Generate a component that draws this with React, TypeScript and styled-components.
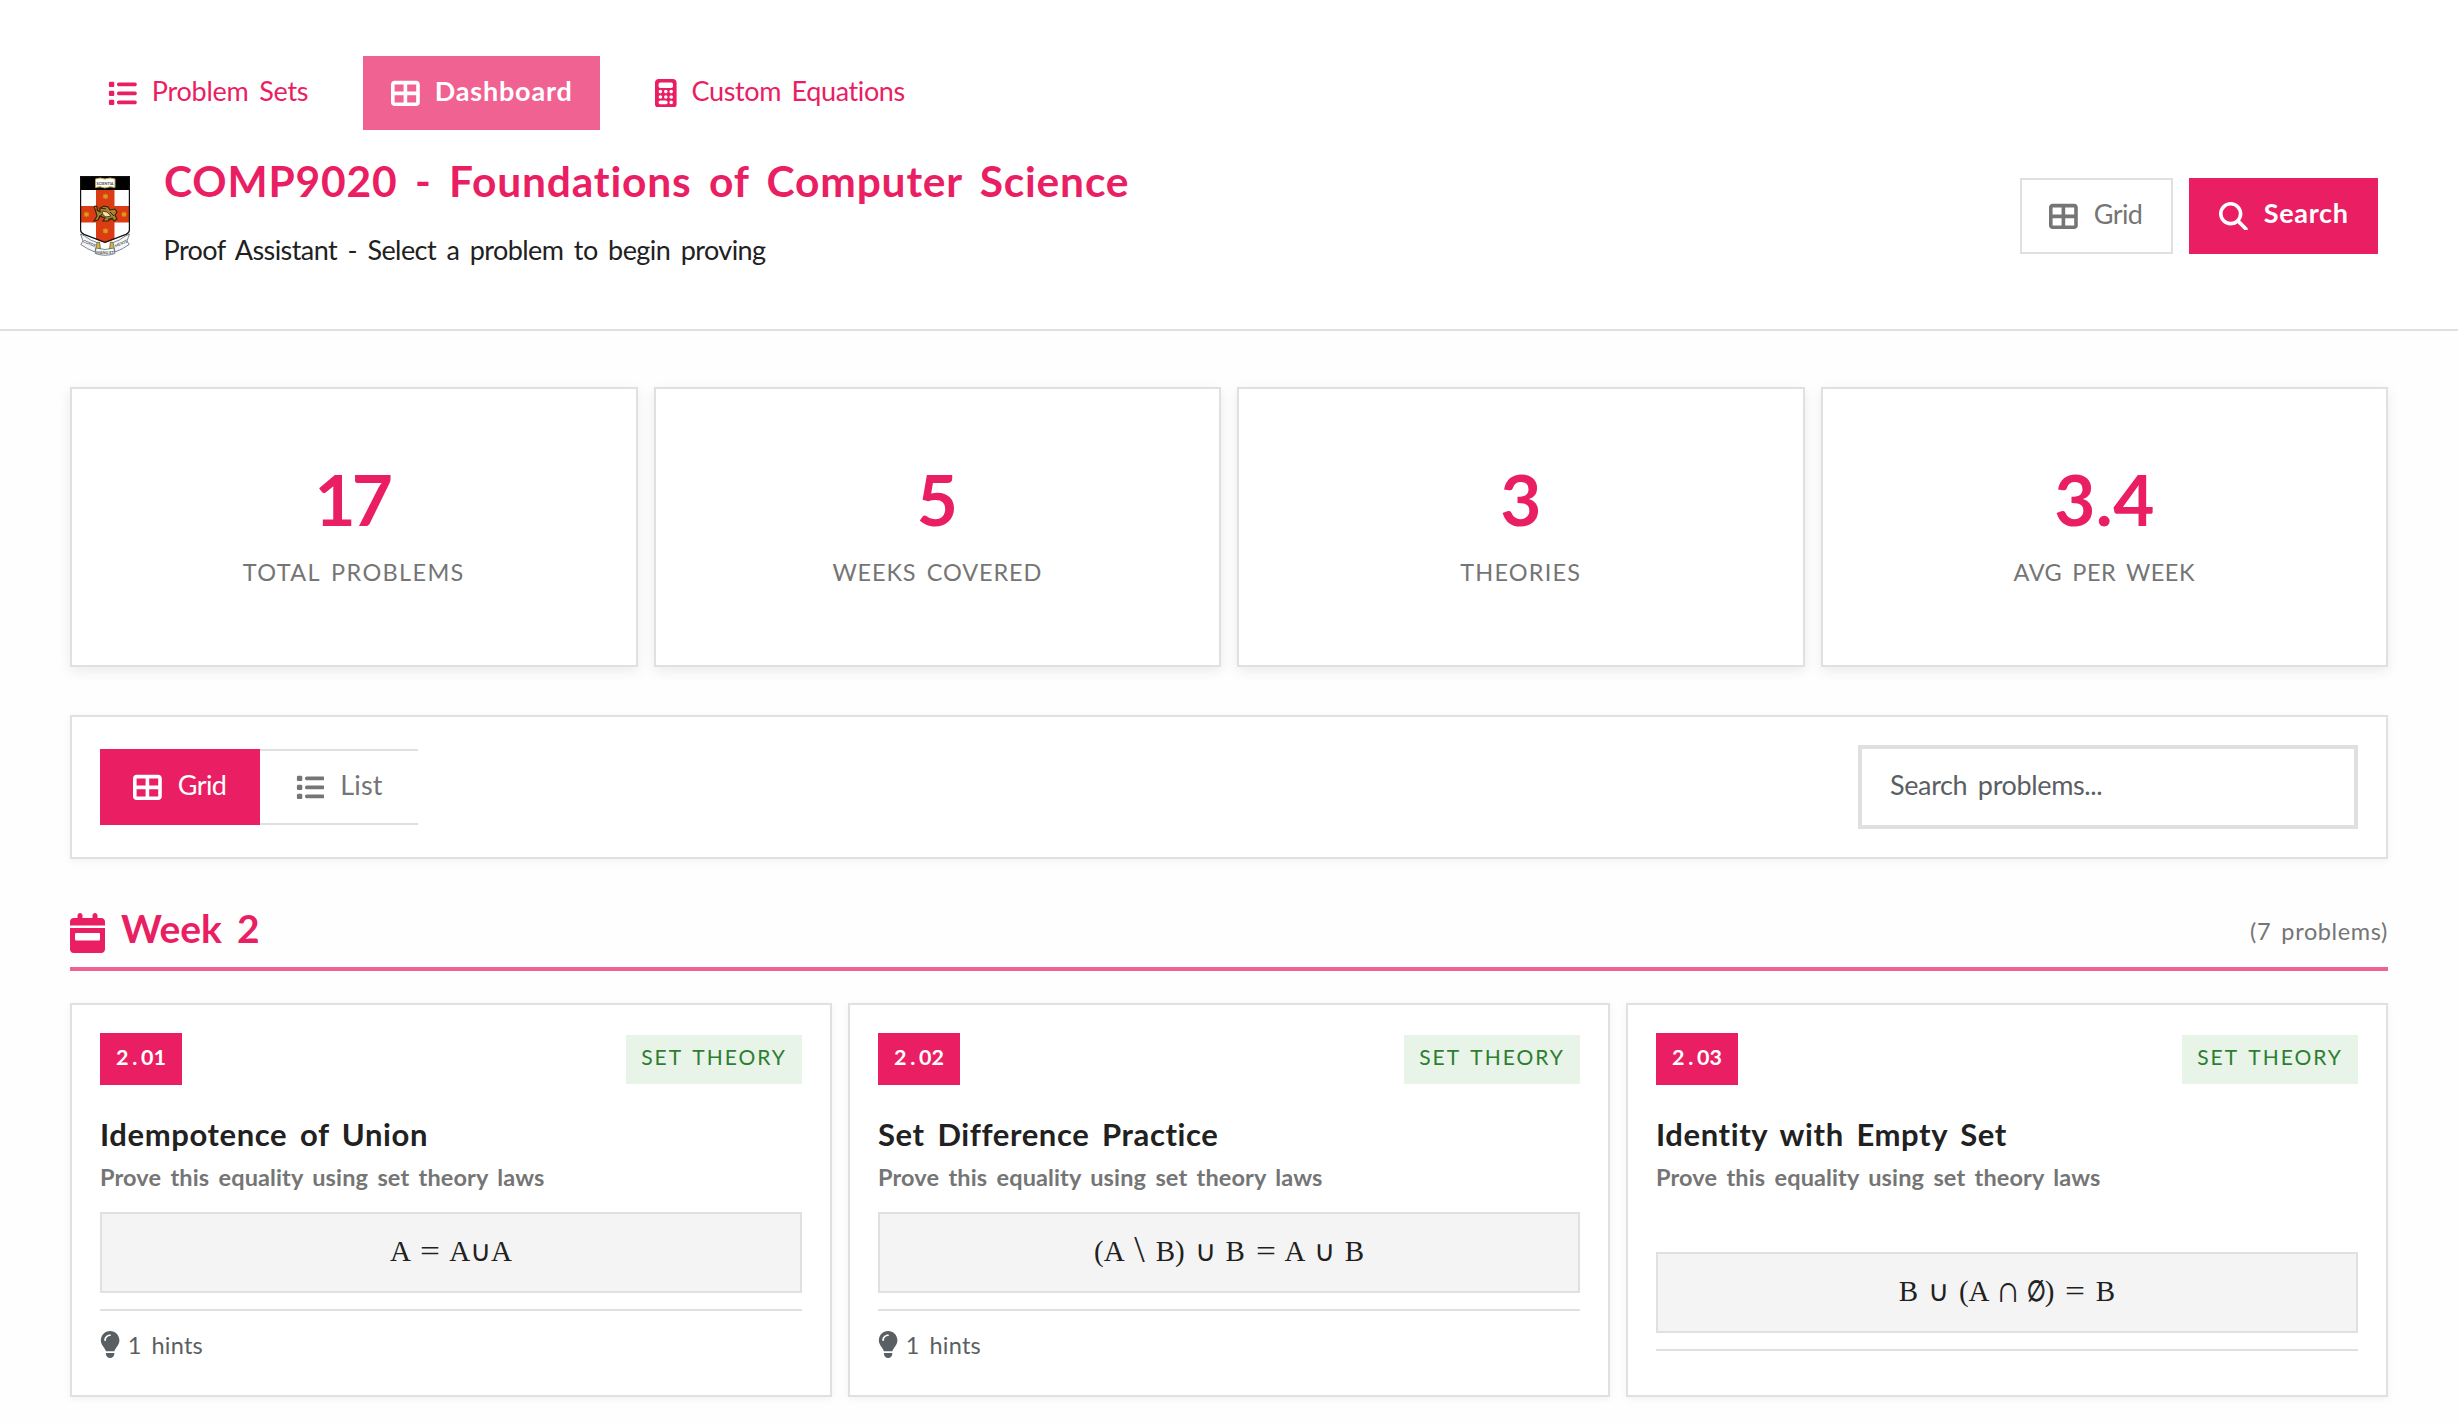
import React from "react";
import styled, { createGlobalStyle, css } from "styled-components";
import {
  FaCalculator,
  FaCalendarWeek,
  FaLightbulb,
  FaList,
  FaMagnifyingGlass,
  FaTableCellsLarge,
} from "react-icons/fa6";

const color = {
  primary: "#e91e63",
  primaryLight: "#f06292",
  ink: "#212121",
  muted: "#757575",
  hint: "#5a5f63",
  line: "#e0e0e0",
  page: "#fefefe",
  surface: "#ffffff",
  formula: "#f4f4f4",
  green: "#2e7d32",
  greenSoft: "#e8f4e8",
};

const GlobalStyle = createGlobalStyle`
  *, *::before, *::after { box-sizing: border-box; }
  body {
    margin: 0;
    background: ${color.page};
    color: ${color.ink};
    font-family: Lato, "Liberation Sans", sans-serif;
    font-size: 27px;
  }
  h1, h2, h3, p { margin: 0; }
  button, input { font: inherit; }
`;

interface TextProps {
  $track?: number;
  $lift?: number;
}

const tracking = css<TextProps>`
  letter-spacing: ${(p) => p.$track ?? 0}px;
  padding-bottom: ${(p) => p.$lift ?? 0}px;
  white-space: nowrap;
`;

const Page = styled.div`
  min-height: 1424px;
  overflow: hidden;
`;

const Header = styled.header`
  height: 331px;
  padding: 56px 80px 0;
  border-bottom: 2px solid ${color.line};
  background: ${color.surface};
`;

const Nav = styled.nav`
  display: flex;
  gap: 27px;
`;

const Label = styled.span<TextProps>`
  ${tracking}
  word-spacing: 0.15em;
`;

const NavItem = styled.button<{ $active?: boolean; $width: number; $icon?: number }>`
  display: flex;
  align-items: center;
  gap: 15px;
  width: ${(p) => p.$width}px;
  height: 74px;
  padding: 0 28px;
  border: 0;
  background: ${(p) => (p.$active ? color.primaryLight : "transparent")};
  color: ${(p) => (p.$active ? "#fff" : color.primary)};
  font-weight: ${(p) => (p.$active ? 700 : 400)};
  svg { flex: none; height: 28.8px; width: ${(p) => p.$icon ?? 28.8}px; }
`;

const HeaderRow = styled.div`
  display: flex;
  align-items: center;
  justify-content: space-between;
  height: 114px;
  margin-top: 29px;
`;

const Brand = styled.div`
  display: flex;
  align-items: center;
  gap: 34px;
`;

const BrandText = styled.div`
  display: flex;
  flex-direction: column;
  gap: 24px;
`;

const PageTitle = styled.h1`
  color: ${color.primary};
  font-size: 42.5px;
  line-height: 43px;
  letter-spacing: 0.81px;
  word-spacing: 6.4px;
`;

const Subtitle = styled.p`
  margin-left: -0.5px;
  line-height: 47px;
  letter-spacing: -0.57px;
  word-spacing: 4.1px;
`;

const Actions = styled.div`
  display: flex;
  gap: 16px;
`;

const ActionButton = styled.button<{ $primary?: boolean }>`
  display: flex;
  align-items: center;
  gap: 16px;
  width: ${(p) => (p.$primary ? 189 : 153)}px;
  height: 76px;
  padding: 0 0 0 ${(p) => (p.$primary ? 28 : 27)}px;
  border: 2px solid ${(p) => (p.$primary ? color.primary : color.line)};
  background: ${(p) => (p.$primary ? color.primary : color.surface)};
  color: ${(p) => (p.$primary ? "#fff" : color.muted)};
  font-weight: ${(p) => (p.$primary ? 700 : 400)};
  svg { flex: none; height: 28.8px; width: 28.8px; }
`;

const Main = styled.main`
  padding: 56px 70px 27px;
`;

const Stats = styled.section`
  display: grid;
  grid-template-columns: repeat(4, 1fr);
  gap: 16px;
`;

const StatCard = styled.div`
  display: flex;
  flex-direction: column;
  align-items: center;
  gap: 22px;
  height: 280px;
  padding-top: 74px;
  border: 2px solid ${color.line};
  background: ${color.surface};
  box-shadow: 0 4px 12px rgba(0, 0, 0, 0.08);
`;

const StatValue = styled.div<TextProps>`
  ${tracking}
  margin-left: ${(p) => p.$track ?? 0}px;
  color: ${color.primary};
  font-size: 71px;
  font-weight: 700;
  line-height: 72px;
`;

const StatLabel = styled.div<TextProps>`
  ${tracking}
  color: ${color.muted};
  font-size: 23.5px;
  line-height: 30px;
  text-transform: uppercase;
  word-spacing: 3.5px;
`;

const Toolbar = styled.section`
  display: flex;
  align-items: center;
  justify-content: space-between;
  height: 144px;
  margin-top: 48px;
  padding: 0 28px;
  border: 2px solid ${color.line};
  background: ${color.surface};
  box-shadow: 0 2px 8px rgba(0, 0, 0, 0.05);
`;

const Toggle = styled.div`
  display: flex;
`;

const ToggleItem = styled.button<{ $active?: boolean }>`
  display: flex;
  align-items: center;
  gap: 16px;
  width: ${(p) => (p.$active ? 160 : 158)}px;
  height: 76px;
  padding: 0 0 0 ${(p) => (p.$active ? 33 : 35.5)}px;
  border: solid ${(p) => (p.$active ? color.primary : color.line)};
  border-width: 2px 0;
  background: ${(p) => (p.$active ? color.primary : color.surface)};
  color: ${(p) => (p.$active ? "#fff" : color.muted)};
  svg { flex: none; height: 28.8px; width: 28.8px; }
`;

const SearchField = styled.input`
  width: 500px;
  height: 84px;
  padding: 0 28px 5px;
  border: 4px solid ${color.line};
  border-radius: 0;
  background: ${color.surface};
  letter-spacing: -0.36px;
  word-spacing: 4px;
  outline: none;
  &::placeholder { color: ${color.hint}; opacity: 1; }
`;

const WeekHeader = styled.div`
  display: flex;
  align-items: center;
  justify-content: space-between;
  height: 72px;
  margin-top: 40px;
  border-bottom: 4px solid ${color.primaryLight};
`;

const WeekTitle = styled.h2`
  display: flex;
  align-items: center;
  gap: 16px;
  color: ${color.primary};
  font-size: 39px;
  svg { height: 40px; width: 35px; }
`;

const WeekCount = styled.span<TextProps>`
  ${tracking}
  color: ${color.muted};
  font-size: 23.5px;
  word-spacing: 3.5px;
`;

const Cards = styled.section`
  display: grid;
  grid-template-columns: repeat(3, 1fr);
  gap: 16px;
  margin-top: 32px;
`;

const Card = styled.article`
  display: flex;
  flex-direction: column;
  height: 394px;
  padding: 28px;
  border: 2px solid ${color.line};
  background: ${color.surface};
  box-shadow: 0 2px 8px rgba(0, 0, 0, 0.05);
`;

const CardTop = styled.div`
  display: flex;
  align-items: center;
  justify-content: space-between;
  height: 52px;
`;

const Badge = styled.span`
  display: flex;
  align-items: center;
  height: 52px;
  padding: 0 16px 4px;
  background: ${color.primary};
  color: #fff;
  font-size: 21.5px;
  font-weight: 700;
`;

const Digit = styled.span`
  width: 12.5px;
  text-align: center;
`;

const Tag = styled.span`
  display: flex;
  align-items: center;
  justify-content: center;
  width: 176px;
  height: 49px;
  padding-bottom: 5px;
  background: ${color.greenSoft};
  color: ${color.green};
  font-size: 21px;
  letter-spacing: 1.95px;
  word-spacing: 3.2px;
  text-transform: uppercase;
  white-space: nowrap;
`;

const CardTitle = styled.h3`
  margin-top: 27px;
  font-size: 31px;
  line-height: 44px;
  letter-spacing: 0.6px;
  word-spacing: 4.6px;
`;

const CardText = styled.p`
  margin-top: 1px;
  color: ${color.muted};
  font-size: 23.5px;
  font-weight: 700;
  line-height: 40px;
  letter-spacing: 0.12px;
  word-spacing: 3.5px;
`;

const Formula = styled.div`
  display: flex;
  align-items: center;
  justify-content: center;
  height: 81px;
  margin-top: auto;
  padding-bottom: 3px;
  border: 2px solid ${color.line};
  background: ${color.formula};
  font-family: "Liberation Serif", serif;
  font-size: 29px;
  line-height: 40px;
  word-spacing: 2.6px;
  white-space: pre;
`;

const Symbol = styled.span<{ $width: number; $x: number; $y: number; $stroke?: number }>`
  display: inline-flex;
  justify-content: center;
  width: ${(p) => p.$width}px;
  transform: scale(${(p) => p.$x}, ${(p) => p.$y});
  transform-origin: 50% 70%;
  -webkit-text-stroke: ${(p) => p.$stroke ?? 0}px currentColor;
`;

const CardFooter = styled.div`
  margin-top: 16px;
  padding-top: 16px;
  border-top: 2px solid ${color.line};
`;

const Hint = styled.div`
  display: flex;
  align-items: center;
  gap: 7.5px;
  height: 40px;
  color: ${color.hint};
  font-size: 23.5px;
  svg { width: 20.25px; height: 27px; margin-bottom: 5px; }
`;

const CrestSvg = styled.svg`
  display: block;
  width: 50px;
  height: 80px;
`;

const stars: [number, number][] = [[25.5, 20], [6.5, 38], [44, 38], [25.5, 54.5]];

const Crest = () => (
  <CrestSvg viewBox="0 0 50 80" aria-label="University crest">
    <clipPath id="shield">
      <path d="M0 0H50V54Q50 57 46 59L25 67L4 59Q0 57 0 54Z" />
    </clipPath>
    <g clipPath="url(#shield)">
      <rect width="50" height="80" fill="#fff" />
      <rect x="16" y="14" width="18.5" height="54" fill="#dc3c14" />
      <rect y="30" width="50" height="16.5" fill="#dc3c14" />
      <rect width="50" height="14" fill="#000" />
    </g>
    <path d="M.6.6H49.4V54Q49.4 56.6 46 58.4L25 66.4L4 58.4Q.6 56.6 .6 54Z" fill="none" stroke="#111" strokeWidth="1.2" />
    <path d="M15.5 3Q20 1 25 3Q30 1 35 3V11.5Q30 10 25 12Q20 10 15.5 11.5Z" fill="#fff" stroke="#b9a04a" strokeWidth="1" />
    <text x="25" y="8.6" textAnchor="middle" fontSize="3.8" fontWeight="700" fill="#444">SCIENTIA</text>
    {stars.map(([x, y]) => (
      <path
        key={`${x}-${y}`}
        d={`M${x} ${y - 2.8}l.8 1.5 1.6-.4-.4 1.6 .9 .4-.9 .8 .2 1.4-1.5-.3-.7 1.1-.7-1.1-1.5 .3 .2-1.4-.9-.8 .9-.4-.4-1.6 1.6 .4z`}
        fill="#d99a14"
      />
    ))}
    <path d="M15 33Q13 30 16 30Q18 31 17 34L20 36L20 32L24 30L28 31L30 34L35 33L37 36L35 39L37 43L34 45L32 42L28 45L23 45L25 42L20 40L18 44L14 45L17 40Z" fill="#a8842c" stroke="#2d210c" strokeWidth="1.1" />
    <path d="M22 35L27 36L31 40L26 41L23 39Z" fill="#f2dfb6" stroke="#3a290d" strokeWidth=".8" />
    <path d="M20 32L26 33M30 36L34 40M19 42L22 38M28 43L33 43" stroke="#2d210c" strokeWidth="1" fill="none" />
    <path d="M14.5 67L19.5 66L20.5 73L16 75Z M35.5 67L30.5 66L29.5 73L34 75Z" fill="#d8b637" stroke="#333" strokeWidth=".6" />
    <path d="M.5 58L4.5 60Q11 65 17 66.5L15 76Q7 73 .8 68.5L3 65Z" fill="#f5f7fa" stroke="#5a6872" strokeWidth=".8" />
    <path d="M49.5 58L45.5 60Q39 65 33 66.5L35 76Q43 73 49.2 68.5L47 65Z" fill="#f5f7fa" stroke="#5a6872" strokeWidth=".8" />
    <path d="M16 72Q25 75 34 72L34.8 77.5Q25 81 15.2 77.5Z" fill="#f5f7fa" stroke="#5a6872" strokeWidth=".8" />
    <text transform="translate(2.8 66) rotate(24)" fontSize="3.9" fontWeight="700" fill="#555">CORDE</text>
    <text x="25" y="78" textAnchor="middle" fontSize="3.9" fontWeight="700" fill="#555">MANU ET</text>
    <text transform="translate(35.5 71.5) rotate(-24)" fontSize="3.9" fontWeight="700" fill="#555">MENTE</text>
  </CrestSvg>
);

const symbols: Record<string, { width: number; x: number; y: number; stroke?: number }> = {
  "=": { width: 21.8, x: 1.22, y: 1 },
  "\\": { width: 13, x: 1.3, y: 1.3 },
  "∩": { width: 20, x: 1.2, y: 1.3 },
  "∅": { width: 17, x: 0.74, y: 1, stroke: 0.9 },
};

const Equation = ({ source }: { source: string }) => (
  <Formula>
    <span>
      {source.split(/([=∩∅\\])/).map((part, i) => {
        const s = symbols[part];
        return s ? (
          <Symbol key={i} $width={s.width} $x={s.x} $y={s.y} $stroke={s.stroke}>{part}</Symbol>
        ) : (
          <React.Fragment key={i}>{part}</React.Fragment>
        );
      })}
    </span>
  </Formula>
);

const stats = [
  { value: "17", label: "Total Problems", valueTrack: -4, track: 1.34 },
  { value: "5", label: "Weeks Covered", valueTrack: 0, track: 0.85 },
  { value: "3", label: "Theories", valueTrack: 0, track: 1.18 },
  { value: "3.4", label: "Avg per Week", valueTrack: 0.5, track: 0.5 },
];

const problems = [
  { id: "2.01", title: "Idempotence of Union", formula: "A = A∪A", hints: 1 },
  { id: "2.02", title: "Set Difference Practice", formula: "(A \\ B) ∪ B = A ∪ B", hints: 1 },
  { id: "2.03", title: "Identity with Empty Set", formula: "B ∪ (A ∩ ∅) = B", hints: 0 },
];

export default function App() {
  return (
    <Page>
      <GlobalStyle />
      <Header>
        <Nav>
          <NavItem $width={256}>
            <FaList />
            <Label $track={-0.26} $lift={5}>Problem Sets</Label>
          </NavItem>
          <NavItem $width={237} $active>
            <FaTableCellsLarge />
            <Label $track={0.8} $lift={6}>Dashboard</Label>
          </NavItem>
          <NavItem $width={307} $icon={21.6}>
            <FaCalculator />
            <Label $track={-0.38} $lift={5}>Custom Equations</Label>
          </NavItem>
        </Nav>
        <HeaderRow>
          <Brand>
            <Crest />
            <BrandText>
              <PageTitle>COMP9020 - Foundations of Computer Science</PageTitle>
              <Subtitle>Proof Assistant - Select a problem to begin proving</Subtitle>
            </BrandText>
          </Brand>
          <Actions>
            <ActionButton>
              <FaTableCellsLarge />
              <Label $track={-0.6} $lift={5}>Grid</Label>
            </ActionButton>
            <ActionButton $primary>
              <FaMagnifyingGlass />
              <Label $track={0.68} $lift={8}>Search</Label>
            </ActionButton>
          </Actions>
        </HeaderRow>
      </Header>
      <Main>
        <Stats>
          {stats.map((s) => (
            <StatCard key={s.label}>
              <StatValue $track={s.valueTrack}>{s.value}</StatValue>
              <StatLabel $track={s.track}>{s.label}</StatLabel>
            </StatCard>
          ))}
        </Stats>
        <Toolbar>
          <Toggle>
            <ToggleItem $active>
              <FaTableCellsLarge />
              <Label $track={-0.6} $lift={5}>Grid</Label>
            </ToggleItem>
            <ToggleItem>
              <FaList />
              <Label $track={0.15} $lift={5}>List</Label>
            </ToggleItem>
          </Toggle>
          <SearchField placeholder="Search problems..." />
        </Toolbar>
        <WeekHeader>
          <WeekTitle>
            <FaCalendarWeek />
            <Label $track={-0.1} $lift={10}>Week 2</Label>
          </WeekTitle>
          <WeekCount $track={0.63} $lift={4}>(7 problems)</WeekCount>
        </WeekHeader>
        <Cards>
          {problems.map((p) => (
            <Card key={p.id}>
              <CardTop>
                <Badge>
                  {p.id.split("").map((c, i) => (
                    <Digit key={i}>{c}</Digit>
                  ))}
                </Badge>
                <Tag>Set Theory</Tag>
              </CardTop>
              <CardTitle>{p.title}</CardTitle>
              <CardText>Prove this equality using set theory laws</CardText>
              <Equation source={p.formula} />
              <CardFooter>
                {p.hints > 0 && (
                  <Hint>
                    <FaLightbulb />
                    <Label $track={0.25} $lift={4}>{p.hints} hints</Label>
                  </Hint>
                )}
              </CardFooter>
            </Card>
          ))}
        </Cards>
      </Main>
    </Page>
  );
}
